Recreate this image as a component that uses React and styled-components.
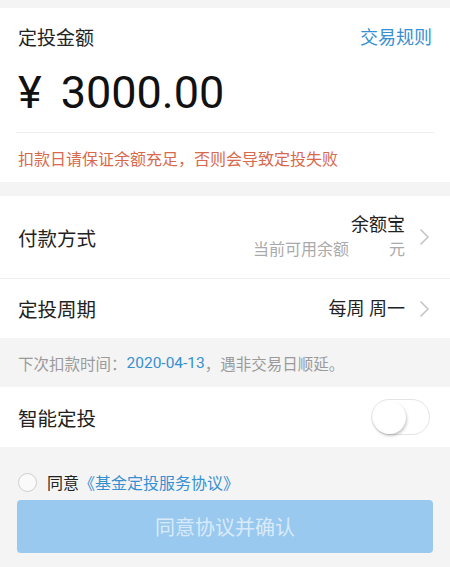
import React, { useState } from "react";
import styled, { createGlobalStyle } from "styled-components";

const GlobalStyle = createGlobalStyle`
  body {
    margin: 0;
    background: #f4f4f4;
    font-family: Roboto, "Noto Sans CJK SC", sans-serif;
    color: #222;
  }
`;

const Page = styled.div`
  min-height: 567px;
  padding-top: 8px;
  background: #f4f4f4;
`;

const Card = styled.div`
  background: #fff;
`;

const Header = styled.div`
  height: 56px;
  padding: 0 18px;
  display: flex;
  align-items: center;
  justify-content: space-between;
  font-size: 19px;
`;

const Link = styled.span`
  color: #3690d2;
  font-size: ${(p) => p.size || 16}px;
`;

const Amount = styled.div`
  margin: 6px 18px 17px;
  line-height: 45px;
  font-size: 45px;
  color: #111;
`;

const Yen = styled.span`
  margin-right: 19px;
`;

const Divider = styled.div`
  height: 1px;
  margin: 0 16px;
  background: #eee;
`;

const Warning = styled.div`
  height: 49px;
  padding: 0 18px;
  display: flex;
  align-items: center;
  font-size: 16px;
  color: #d8694c;
`;

const Gap = styled.div`
  height: 14px;
`;

const Row = styled.div`
  height: ${(p) => p.h}px;
  padding: 0 20px 0 18px;
  display: flex;
  align-items: center;
  justify-content: space-between;
  background: #fff;
  border-bottom: ${(p) => (p.line ? "1px solid #efefef" : "none")};
`;

const Label = styled.span`
  font-size: 19.5px;
  color: #222;
`;

const Right = styled.div`
  display: flex;
  align-items: center;
`;

const Value = styled.div`
  display: flex;
  flex-direction: column;
  align-items: flex-end;
  font-size: 18px;
  line-height: 25px;
  color: #222;
`;

const Sub = styled.div`
  font-size: 16px;
  color: #aaa;
  line-height: 26px;

  span {
    margin-left: 40px;
  }
`;

const Chevron = styled.svg`
  margin-left: 14px;
  width: 11px;
  height: 18px;
`;

const Note = styled.div`
  height: 49px;
  padding: 0 18px;
  display: flex;
  align-items: center;
  font-size: 15.5px;
  color: #9a9a9a;
`;

const Track = styled.div`
  width: 59px;
  height: 36px;
  box-sizing: border-box;
  border: 1px solid #e4e4e4;
  border-radius: 18px;
  background: #fff;
  display: flex;
  align-items: center;
  justify-content: ${(p) => (p.on ? "flex-end" : "flex-start")};
  padding: 0 1px;
  cursor: pointer;
`;

const Knob = styled.div`
  width: 33px;
  height: 33px;
  border-radius: 50%;
  background: #fff;
  box-shadow: 1px 2px 3px rgba(0, 0, 0, 0.22);
`;

const Agree = styled.div`
  height: 30px;
  margin-top: 20px;
  padding: 0 18px;
  display: flex;
  align-items: center;
  gap: 10px;
  font-size: 16px;
  color: #222;
`;

const Circle = styled.div`
  width: 19px;
  height: 19px;
  box-sizing: border-box;
  border-radius: 50%;
  border: 1px solid #cfcfcf;
  background: ${(p) => (p.checked ? "#3690d2" : "#fafafa")};
`;

const Button = styled.button`
  display: block;
  width: 416px;
  height: 53px;
  margin: 3px 17px 0;
  border: 0;
  border-radius: 4px;
  background: #99c9ef;
  color: rgba(255, 255, 255, 0.65);
  font-family: inherit;
  font-size: 20px;
`;

const Arrow = () => (
  <Chevron viewBox="0 0 11 18">
    <path d="M1.5 1.5 L9 9 L1.5 16.5" fill="none" stroke="#c6c6c6" strokeWidth="1.6" />
  </Chevron>
);

export default function App() {
  const [smart, setSmart] = useState(false);
  const [agreed, setAgreed] = useState(false);

  return (
    <Page>
      <GlobalStyle />
      <Card>
        <Header>
          <span>定投金额</span>
          <Link size={18}>交易规则</Link>
        </Header>
        <Amount>
          <Yen>¥</Yen>3000.00
        </Amount>
        <Divider />
        <Warning>扣款日请保证余额充足，否则会导致定投失败</Warning>
      </Card>
      <Gap />
      <Row h={82} line>
        <Label>付款方式</Label>
        <Right>
          <Value>
            余额宝
            <Sub>
              当前可用余额<span>元</span>
            </Sub>
          </Value>
          <Arrow />
        </Right>
      </Row>
      <Row h={59}>
        <Label>定投周期</Label>
        <Right>
          <Value>每周 周一</Value>
          <Arrow />
        </Right>
      </Row>
      <Note>
        下次扣款时间：<Link size={15.5}>2020-04-13</Link>，遇非交易日顺延。
      </Note>
      <Row h={60}>
        <Label>智能定投</Label>
        <Track on={smart ? 1 : 0} onClick={() => setSmart(!smart)}>
          <Knob />
        </Track>
      </Row>
      <Agree>
        <Circle checked={agreed} onClick={() => setAgreed(!agreed)} />
        <span>
          同意<Link size={16}>《基金定投服务协议》</Link>
        </span>
      </Agree>
      <Button type="button">同意协议并确认</Button>
    </Page>
  );
}
